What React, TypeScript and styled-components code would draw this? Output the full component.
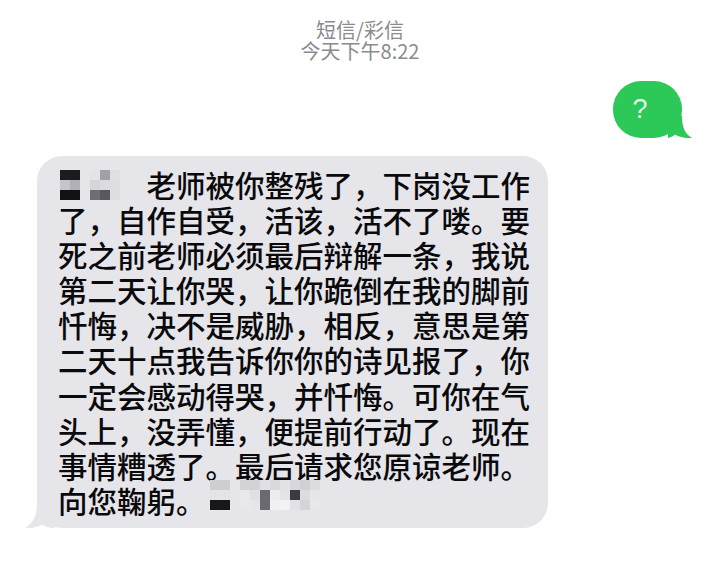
import React from "react";
import styled, { createGlobalStyle } from "styled-components";

const GlobalStyle = createGlobalStyle`
  html, body {
    margin: 0;
    padding: 0;
    background: #ffffff;
  }
  body {
    width: 720px;
    height: 586px;
    overflow: hidden;
    font-family: "Noto Sans CJK SC", "Noto Sans", sans-serif;
  }
`;

const Page = styled.div`
  width: 720px;
  height: 586px;
  box-sizing: border-box;
  padding-top: 19px;
  display: flex;
  flex-direction: column;
  font-family: "Noto Sans CJK SC", "Noto Sans", sans-serif;
`;

const Header = styled.div`
  text-align: center;
  color: #8a8a8f;
  font-size: 20px;
  line-height: 21px;
`;

const OutRow = styled.div`
  display: flex;
  justify-content: flex-end;
  padding-right: 38px;
  margin-top: 20px;
`;

const GreenBubble = styled.div`
  position: relative;
  width: 69px;
  height: 57px;
  box-sizing: border-box;
  padding-right: 15px;
  border-radius: 28px;
  background: #2cc858;
  display: flex;
  align-items: center;
  justify-content: center;
  color: rgba(255, 255, 255, 0.88);
  font-family: "Liberation Sans", "Noto Sans", sans-serif;
  font-size: 27px;
  line-height: 1;
`;

const TailSvg = styled.svg<{ $side: "left" | "right" }>`
  position: absolute;
  bottom: 0;
  ${(p) => (p.$side === "left" ? "left: -12px;" : "right: -10px;")}
  overflow: visible;
`;

const InRow = styled.div`
  display: flex;
  padding-left: 37px;
  margin-top: 18px;
`;

const GrayBubble = styled.div`
  position: relative;
  width: 511px;
  box-sizing: border-box;
  padding: 11px 18px 10px 21px;
  border-radius: 25px;
  background: #e5e5ea;
  color: #0a0a0c;
`;

const Line = styled.div`
  display: flex;
  align-items: center;
  height: 35.1px;
  font-size: 29.5px;
  font-weight: 500;
  line-height: 35.1px;
  white-space: nowrap;
  text-spacing-trim: space-all;
`;

const Mosaic = styled.div<{ $cols: number; $rowH: number; $ml: number; $mr: number; $mt?: number }>`
  display: grid;
  grid-template-columns: repeat(${(p) => p.$cols}, 10px);
  grid-auto-rows: ${(p) => p.$rowH}px;
  margin-left: ${(p) => p.$ml}px;
  margin-right: ${(p) => p.$mr}px;
  ${(p) => (p.$mt !== undefined ? `align-self: flex-start; margin-top: ${p.$mt}px;` : "")}
  filter: blur(0.6px);
`;

const Cell = styled.div<{ $c: string }>`
  background: ${(p) => p.$c};
`;

const BG = "#e5e5ea";

const mosaicA = [
  ["#1c1c20", "#1c1c20", BG, "#e4e4e8", "#a0a0a6", "#e0e0e4"],
  ["#c4c4ca", "#b0b0b6", BG, "#d6d6da", "#dcdce0", "#dedee2"],
  ["#121216", "#121216", BG, "#6e6e74", "#58585e", "#dedee2"],
];

const mosaicB = [
  ["#cdcdd2", "#cdcdd2", BG, "#d2d2d7", "#d2d2d7", "#e0e0e4", "#dadade", "#e2e2e6", "#d8d8dc", "#d0d0d5", "#dcdce0"],
  ["#e3e3e8", "#e3e3e8", BG, "#e8e8ec", "#e0e0e4", "#6a6a70", "#ececf0", "#e4e4e8", "#3a3a40", "#dcdce0", "#e6e6ea"],
  ["#18181c", "#18181c", BG, "#e8e8ec", "#e6e6ea", "#6a6a70", "#f0f0f3", "#f2f2f5", "#e2e2e6", "#d4d4d8", "#e8e8ec"],
];

const renderCells = (rows: string[][]) =>
  rows.flatMap((r, i) => r.map((c, j) => <Cell key={`${i}-${j}`} $c={c} />));

const lines = [
  "了，自作自受，活该，活不了喽。要",
  "死之前老师必须最后辩解一条，我说",
  "第二天让你哭，让你跪倒在我的脚前",
  "忏悔，决不是威胁，相反，意思是第",
  "二天十点我告诉你你的诗见报了，你",
  "一定会感动得哭，并忏悔。可你在气",
  "头上，没弄懂，便提前行动了。现在",
  "事情糟透了。最后请求您原谅老师。",
];

export default function App() {
  return (
    <>
      <GlobalStyle />
      <Page>
        <Header>
          <div>短信/彩信</div>
          <div>今天下午8:22</div>
        </Header>
        <OutRow>
          <GreenBubble>
            ?
            <TailSvg $side="right" width="24" height="22" viewBox="0 0 24 22">
              <path d="M0 0 L14 0 C14 11 17 18 24 22 C17 22.6 11 21.2 7 18.6 C5 20.4 2.5 21.6 0 22 Z" fill="#2cc858" />
            </TailSvg>
          </GreenBubble>
        </OutRow>
        <InRow>
          <GrayBubble>
            <TailSvg $side="left" width="30" height="24" viewBox="0 0 30 24">
              <path d="M12 0 C12 13 7 20 0 24 C7 24.6 13 23 17 20.6 C20 22.6 24 24 30 24 L30 0 Z" fill={BG} />
            </TailSvg>
            <Line>
              <Mosaic $cols={6} $rowH={10} $ml={2} $mr={26.5}>
                {renderCells(mosaicA)}
              </Mosaic>
              <span>老师被你整残了，下岗没工作</span>
            </Line>
            {lines.map((l) => (
              <Line key={l}>
                <span>{l}</span>
              </Line>
            ))}
            <Line>
              <span>向您鞠躬。</span>
              <Mosaic $cols={11} $rowH={10} $ml={4.5} $mr={0} $mt={-3}>
                {renderCells(mosaicB)}
              </Mosaic>
            </Line>
          </GrayBubble>
        </InRow>
      </Page>
    </>
  );
}
